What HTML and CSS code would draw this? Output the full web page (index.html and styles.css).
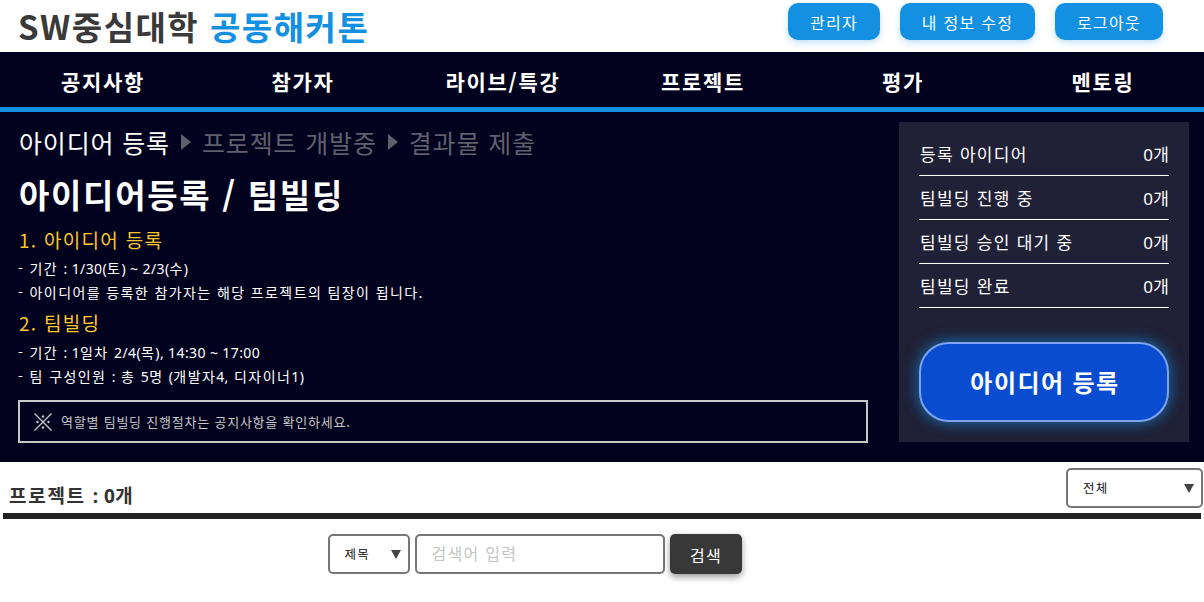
FILE: index.html
```html
<!DOCTYPE html>
<html lang="ko">
<head>
<meta charset="utf-8">
<title>SW중심대학 공동해커톤</title>
<link rel="stylesheet" href="styles.css">
</head>
<body>
<header class="top">
  <h1 class="logo">SW중심대학 <span class="logo-accent">공동해커톤</span></h1>
  <div class="top-actions">
    <a class="top-btn btn-admin">관리자</a>
    <a class="top-btn btn-info">내 정보 수정</a>
    <a class="top-btn btn-logout">로그아웃</a>
  </div>
</header>
<nav class="nav">
  <a>공지사항</a><a>참가자</a><a>라이브/특강</a><a>프로젝트</a><a>평가</a><a>멘토링</a>
</nav>
<section class="hero">
  <div class="info">
    <div class="steps">
      <span class="step-on">아이디어 등록</span>
      <i class="tri"></i>
      <span>프로젝트 개발중</span>
      <i class="tri"></i>
      <span>결과물 제출</span>
    </div>
    <h2 class="hero-title">아이디어등록 / 팀빌딩</h2>
    <h3 class="sub first">1. 아이디어 등록</h3>
    <p class="line">- 기간 <span class="num">: 1/30(</span>토<span class="num">) ~ 2/3(</span>수<span class="num">)</span></p>
    <p class="line">- 아이디어를 등록한 참가자는 해당 프로젝트의 팀장이 됩니다.</p>
    <h3 class="sub">2. 팀빌딩</h3>
    <p class="line">- 기간 <span class="num">: 1</span>일차 <span class="num">2/4(</span>목<span class="num">), 14:30 ~ 17:00</span></p>
    <p class="line">- 팀 구성인원 <span class="num">:</span> 총 <span class="num">5</span>명 <span class="num">(</span>개발자<span class="num">4,</span> 디자이너<span class="num">1)</span></p>
    <div class="notice">
      <svg class="notice-icon" viewBox="0 0 18 18" width="18" height="18" aria-hidden="true">
        <path d="M.5.5 17.5 17.5M17.5.5.5 17.5" stroke="#c8c8c8" stroke-width="1.3" fill="none"/>
        <circle cx="9" cy="3.5" r="1.2" fill="#c8c8c8"/><circle cx="9" cy="14.5" r="1.2" fill="#c8c8c8"/>
        <circle cx="3.5" cy="9" r="1.2" fill="#c8c8c8"/><circle cx="14.5" cy="9" r="1.2" fill="#c8c8c8"/>
      </svg>
      <span>역할별 팀빌딩 진행절차는 공지사항을 확인하세요.</span>
    </div>
  </div>
  <aside class="panel">
    <div class="stat"><span>등록 아이디어</span><span class="stat-value"><span class="num">0</span>개</span></div>
    <div class="stat"><span>팀빌딩 진행 중</span><span class="stat-value"><span class="num">0</span>개</span></div>
    <div class="stat"><span>팀빌딩 승인 대기 중</span><span class="stat-value"><span class="num">0</span>개</span></div>
    <div class="stat"><span>팀빌딩 완료</span><span class="stat-value"><span class="num">0</span>개</span></div>
    <button class="cta" type="button">아이디어 등록</button>
  </aside>
</section>
<section class="list">
  <div class="list-head">
    <h4 class="count">프로젝트 <span class="num">: 0</span>개</h4>
    <div class="select select-all">전체</div>
  </div>
  <div class="search">
    <div class="select select-field">제목</div>
    <div class="input">검색어 입력</div>
    <button class="search-btn" type="button">검색</button>
  </div>
</section>
</body>
</html>
```
FILE: styles.css
```css
* { box-sizing: border-box; }
html, body { margin: 0; padding: 0; }
body {
  width: 1204px;
  height: 602px;
  overflow: hidden;
  background: #fff;
  font-family: "Noto Sans CJK KR", "Noto Sans", sans-serif;
  letter-spacing: 0.08em;
}
.num { font-family: "Noto Sans", sans-serif; letter-spacing: 0.4px; line-height: 1; }
.top {
  height: 52px;
  display: flex;
  justify-content: space-between;
  padding: 3px 41px 0 18px;
}
.logo {
  margin: 0;
  font-size: 33px;
  line-height: 46px;
  font-weight: 700;
  letter-spacing: 1.5px;
  color: #3a3a3a;
}
.logo-accent { color: #1490e2; }
.top-actions { display: flex; gap: 20px; height: 37px; }
.top-btn {
  display: flex;
  align-items: center;
  justify-content: center;
  height: 37px;
  border-radius: 10px;
  background: #1490e2;
  color: #fff;
  font-size: 16px;
  box-shadow: 0 3px 6px rgba(20, 144, 226, 0.25);
}
.btn-admin { width: 92px; }
.btn-info { width: 135px; }
.btn-logout { width: 108px; }
.nav {
  height: 60px;
  display: grid;
  grid-template-columns: repeat(6, 200px);
  padding-left: 3px;
  background: #02021e;
  border-bottom: 5px solid #1490e2;
}
.nav a {
  display: flex;
  align-items: center;
  justify-content: center;
  color: #fff;
  font-size: 21px;
  font-weight: 700;
  letter-spacing: 1.7px;
  padding-top: 2px;
}
.hero {
  height: 350px;
  background: #02021e;
  display: flex;
  justify-content: space-between;
  padding: 10px 15px 20px 18px;
}
.info { width: 850px; color: #fff; }
.steps {
  display: flex;
  align-items: center;
  gap: 7px;
  height: 40px;
  padding-left: 1px;
  font-size: 25px;
  letter-spacing: 0.85px;
  color: #5f5f6e;
  margin-bottom: 8px;
}
.step-on { color: #fff; }
.tri {
  width: 0;
  height: 0;
  border-left: 10px solid #5f5f6e;
  border-top: 8px solid transparent;
  border-bottom: 8px solid transparent;
  margin: 0 4px;
}
.hero-title {
  margin: 0;
  padding-left: 1px;
  font-size: 33px;
  line-height: 48px;
  font-weight: 700;
  letter-spacing: 1.7px;
}
.sub {
  margin: 0;
  padding-left: 1px;
  font-size: 19px;
  line-height: 30px;
  font-weight: 400;
  color: #fcc62c;
}
.sub.first { margin-top: 7px; }
.line {
  margin: 0;
  font-size: 14px;
  line-height: 24px;
  letter-spacing: 1.4px;
}
.line + .sub { margin-top: 4px; }
.sub + .line { margin-top: 2px; }
.sub.first + .line { margin-top: 1px; }
.notice {
  display: flex;
  align-items: center;
  gap: 9px;
  height: 43px;
  margin-top: 12px;
  padding-left: 14px;
  border: 2px solid #c8c8c8;
  color: #c8c8c8;
  font-size: 13px;
  letter-spacing: 0.06em;
}
.notice-icon { flex: none; }
.panel {
  width: 290px;
  height: 320px;
  background: #202036;
  padding: 10px 20px 0;
  color: #fff;
}
.stat {
  display: flex;
  justify-content: space-between;
  align-items: center;
  height: 44px;
  padding-left: 1px;
  border-bottom: 1px solid #fff;
  font-size: 17px;
}
.stat-value { letter-spacing: 0; }
.cta {
  display: block;
  width: 250px;
  height: 80px;
  margin-top: 34px;
  padding: 0 0 2px 2px;
  border: 2px solid #7da3ee;
  border-radius: 30px;
  background: #0a4cd0;
  color: #fff;
  font: 700 24px "Noto Sans CJK KR", sans-serif;
  letter-spacing: 0.06em;
  box-shadow: 0 0 14px 2px rgba(20, 144, 226, 0.6);
}
.list { padding: 6px 3px 0; }
.list-head {
  display: flex;
  justify-content: space-between;
  align-items: flex-end;
  height: 51px;
  border-bottom: 6px solid #222;
  padding-left: 6px;
}
.count {
  margin: 0;
  font-size: 19px;
  line-height: 28px;
  font-weight: 700;
  letter-spacing: 0.09em;
  color: #333;
  padding-bottom: 4px;
}
.select {
  position: relative;
  display: flex;
  align-items: center;
  background: #fff;
  border: 2px solid #767676;
  border-radius: 5px;
  color: #111;
  font-size: 12.5px;
  height: 40px;
  padding-bottom: 2px;
}
.select::after {
  content: "";
  position: absolute;
  top: 50%;
  margin-top: -4px;
  right: 7px;
  border-left: 5px solid transparent;
  border-right: 5px solid transparent;
  border-top: 9px solid #444;
}
.select-all {
  width: 137px;
  padding-left: 15px;
  align-self: flex-start;
  margin-right: -2px;
}
.search {
  display: flex;
  justify-content: center;
  gap: 5px;
  margin-top: 15px;
  padding-right: 135px;
}
.select-field { width: 82px; padding-left: 15px; }
.input {
  display: flex;
  align-items: center;
  width: 250px;
  height: 40px;
  padding: 0 0 3px 15px;
  border: 2px solid #767676;
  border-radius: 5px;
  color: #c4c4c4;
  font-size: 16px;
}
.search-btn {
  width: 72px;
  height: 40px;
  padding: 1px 0 0 1px;
  border: 0;
  border-radius: 5px;
  background: #383838;
  color: #fff;
  font: 400 16px "Noto Sans CJK KR", sans-serif;
  letter-spacing: 0.08em;
  box-shadow: 0 3px 7px rgba(0, 0, 0, 0.4);
}
```
